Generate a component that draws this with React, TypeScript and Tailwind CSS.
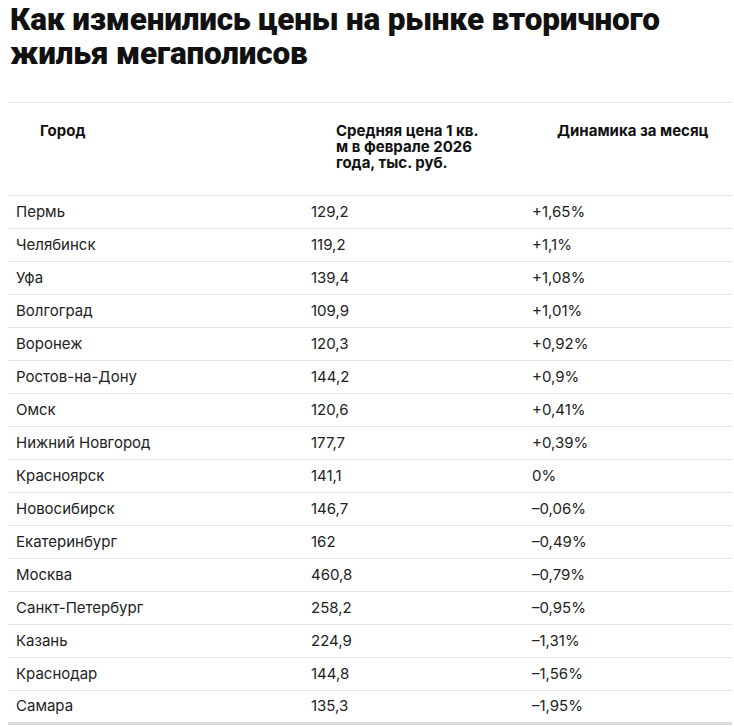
import React from 'react'

type Row = { city: string; price: string; change: string }

const rows: Row[] = [
  { city: 'Пермь', price: '129,2', change: '+1,65%' },
  { city: 'Челябинск', price: '119,2', change: '+1,1%' },
  { city: 'Уфа', price: '139,4', change: '+1,08%' },
  { city: 'Волгоград', price: '109,9', change: '+1,01%' },
  { city: 'Воронеж', price: '120,3', change: '+0,92%' },
  { city: 'Ростов-на-Дону', price: '144,2', change: '+0,9%' },
  { city: 'Омск', price: '120,6', change: '+0,41%' },
  { city: 'Нижний Новгород', price: '177,7', change: '+0,39%' },
  { city: 'Красноярск', price: '141,1', change: '0%' },
  { city: 'Новосибирск', price: '146,7', change: '–0,06%' },
  { city: 'Екатеринбург', price: '162', change: '–0,49%' },
  { city: 'Москва', price: '460,8', change: '–0,79%' },
  { city: 'Санкт-Петербург', price: '258,2', change: '–0,95%' },
  { city: 'Казань', price: '224,9', change: '–1,31%' },
  { city: 'Краснодар', price: '144,8', change: '–1,56%' },
  { city: 'Самара', price: '135,3', change: '–1,95%' }
]

const App: React.FC = () => {
  return (
    <div className="w-[734px] h-[727px] bg-white overflow-hidden">
      <h1 className="pl-[10px] pt-[3px] text-[31.5px] leading-[34px] font-black text-[#111] tracking-[-0.2px] [font-family:Roboto,'Liberation_Sans',sans-serif]">
        Как изменились цены на рынке вторичного
        <br />
        жилья мегаполисов
      </h1>

      <table className="mt-[31px] ml-[8px] w-[724px] table-fixed border-collapse [font-family:Inter,'Noto_Sans',sans-serif]">
        <colgroup>
          <col className="w-[297px]" />
          <col className="w-[221px]" />
          <col />
        </colgroup>
        <thead>
          <tr className="border-t border-b border-[#e2e2e2] h-[93px] align-top text-[15px] leading-[16px] text-[#111]">
            <th className="text-left font-bold pl-[32px] pt-[20px]">Город</th>
            <th className="text-left font-bold pl-[31px] pt-[20px] pr-[34px]">
              Средняя цена 1 кв. м в феврале 2026 года, тыс. руб.
            </th>
            <th className="text-left font-bold pl-[31px] pt-[20px]">Динамика за месяц</th>
          </tr>
        </thead>
        <tbody>
          {rows.map((r, i) => (
            <tr
              key={r.city}
              className={`h-[33px] text-[15px] text-[#222] ${
                i === rows.length - 1 ? 'border-b-[3px] border-[#dcdcdc]' : 'border-b border-[#e2e2e2]'
              }`}
            >
              <td className="pl-[8px]">{r.city}</td>
              <td className="pl-[6px]">{r.price}</td>
              <td className="pl-[6px]">{r.change}</td>
            </tr>
          ))}
        </tbody>
      </table>
    </div>
  )
}

export default App
